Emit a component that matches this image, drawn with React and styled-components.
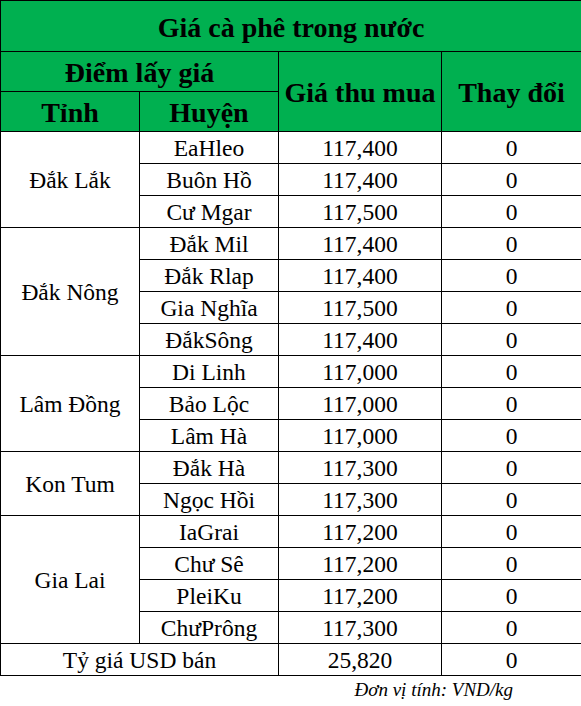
import React from 'react'
import styled, { createGlobalStyle } from 'styled-components'

const GlobalStyle = createGlobalStyle`
  html, body {
    margin: 0;
    padding: 0;
    background: #ffffff;
  }
  body {
    font-family: "Liberation Serif", "Times New Roman", serif;
    color: #000000;
  }
`;

const Wrapper = styled.div`
  width: 581px;
`;

const PriceTable = styled.table`
  width: 581px;
  border-collapse: collapse;
  table-layout: fixed;
`;

const HeadCell = styled.th`
  background: #00b050;
  border: 1px solid #000000;
  font-size: 28px;
  font-weight: bold;
  text-align: center;
  vertical-align: middle;
  padding: ${(p) => p.$pad || 2}px 0 0 0;
  height: ${(p) => (p.$h || 39) - (p.$pad || 2)}px;
  line-height: 1;
  white-space: nowrap;
`;

const Cell = styled.td`
  border: 1px solid #000000;
  font-size: 23.5px;
  text-align: center;
  vertical-align: middle;
  padding: 3px 0 0 0;
  height: 28px;
  line-height: 1;
  white-space: nowrap;
`;

const Note = styled.div`
  font-family: "Liberation Serif", "Times New Roman", serif;
  font-style: italic;
  font-size: 19px;
  text-align: right;
  padding-right: 68px;
  padding-top: 3px;
`;

const provinces = [
  {
    name: 'Đắk Lắk',
    rows: [
      ['EaHleo', '117,400', '0'],
      ['Buôn Hồ', '117,400', '0'],
      ['Cư Mgar', '117,500', '0'],
    ],
  },
  {
    name: 'Đắk Nông',
    rows: [
      ['Đắk Mil', '117,400', '0'],
      ['Đắk Rlap', '117,400', '0'],
      ['Gia Nghĩa', '117,500', '0'],
      ['ĐắkSông', '117,400', '0'],
    ],
  },
  {
    name: 'Lâm Đồng',
    rows: [
      ['Di Linh', '117,000', '0'],
      ['Bảo Lộc', '117,000', '0'],
      ['Lâm Hà', '117,000', '0'],
    ],
  },
  {
    name: 'Kon Tum',
    rows: [
      ['Đắk Hà', '117,300', '0'],
      ['Ngọc Hồi', '117,300', '0'],
    ],
  },
  {
    name: 'Gia Lai',
    rows: [
      ['IaGrai', '117,200', '0'],
      ['Chư Sê', '117,200', '0'],
      ['PleiKu', '117,200', '0'],
      ['ChưPrông', '117,300', '0'],
    ],
  },
];

const App = () => {
  return (
    <Wrapper>
      <GlobalStyle />
      <PriceTable>
        <colgroup>
          <col style={{ width: 139 }} />
          <col style={{ width: 139 }} />
          <col style={{ width: 163 }} />
          <col style={{ width: 140 }} />
        </colgroup>
        <thead>
          <tr>
            <HeadCell colSpan={4} $h={50} $pad={4}>Giá cà phê trong nước</HeadCell>
          </tr>
          <tr>
            <HeadCell colSpan={2}>Điểm lấy giá</HeadCell>
            <HeadCell rowSpan={2}>Giá thu mua</HeadCell>
            <HeadCell rowSpan={2}>Thay đổi</HeadCell>
          </tr>
          <tr>
            <HeadCell>Tỉnh</HeadCell>
            <HeadCell>Huyện</HeadCell>
          </tr>
        </thead>
        <tbody>
          {provinces.map((prov) =>
            prov.rows.map((row, i) => (
              <tr key={prov.name + row[0]}>
                {i === 0 && <Cell rowSpan={prov.rows.length}>{prov.name}</Cell>}
                <Cell>{row[0]}</Cell>
                <Cell>{row[1]}</Cell>
                <Cell>{row[2]}</Cell>
              </tr>
            ))
          )}
          <tr>
            <Cell colSpan={2}>Tỷ giá USD bán</Cell>
            <Cell>25,820</Cell>
            <Cell>0</Cell>
          </tr>
        </tbody>
      </PriceTable>
      <Note>Đơn vị tính: VND/kg</Note>
    </Wrapper>
  )
}

export default App
